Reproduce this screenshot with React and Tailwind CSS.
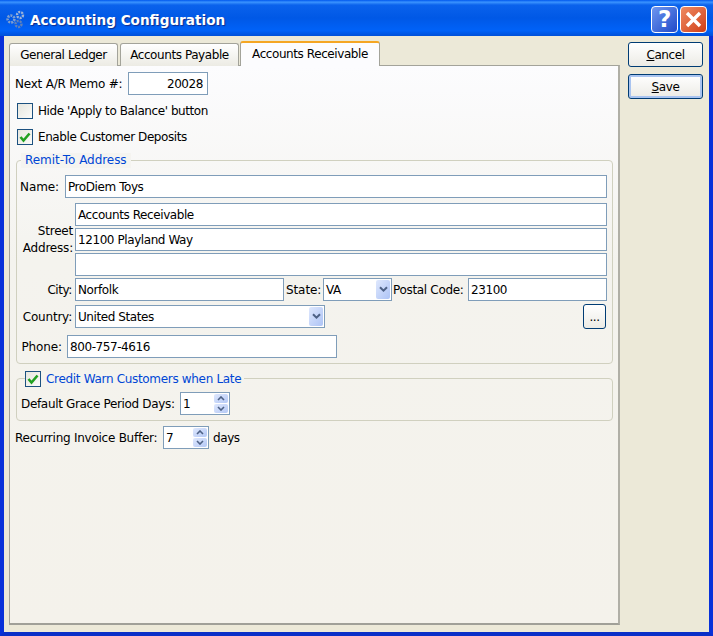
import React from "react";

const font = "font-['DejaVu_Sans',_sans-serif]";

const Field = ({ value = "", className = "", right = false }) => (
  <div
    className={`h-[23px] border border-[#7f9db9] bg-white pl-[2px] leading-[22px] whitespace-nowrap ${
      right ? "text-right pr-[4px]" : ""
    } ${className}`}
  >
    {value}
  </div>
);

const Check = ({ checked, label, blue }) => (
  <div className="flex items-center h-[16px] leading-[16px]">
    <div className="w-[16px] h-[16px] border border-[#1c5180] bg-gradient-to-br from-[#e6e6de] to-[#fbfbf9] flex items-center justify-center">
      {checked && (
        <svg width="12" height="12" viewBox="0 0 12 12">
          <path d="M1.5 6 L4.5 9.5 L10.5 2.5" stroke="#21a121" strokeWidth="2.6" fill="none" />
        </svg>
      )}
    </div>
    <span className={`ml-[5px] ${blue ? "text-[#0046d5] tracking-[-0.32px]" : ""}`}>{label}</span>
  </div>
);

const Combo = ({ value, className = "" }) => (
  <div className={`h-[23px] border border-[#7f9db9] bg-white flex items-center justify-between pl-[2px] pr-[1px] leading-[22px] ${className}`}>
    <span>{value}</span>
    <div className="w-[14px] h-[19px] rounded-[2px] bg-gradient-to-br from-[#dfe8fd] to-[#adc3f5] flex items-center justify-center">
      <svg width="9" height="7" viewBox="0 0 9 7">
        <path d="M1 1.2 L4.5 4.7 L8 1.2" stroke="#4d6185" strokeWidth="2" fill="none" />
      </svg>
    </div>
  </div>
);

const SpinArrow = ({ up }) => (
  <div className="w-[14px] h-[9px] rounded-[2px] bg-gradient-to-br from-[#dfe8fd] to-[#b4c8f5] flex items-center justify-center">
    <svg width="8" height="5" viewBox="0 0 8 5">
      <path d={up ? "M1 4 L4 1 L7 4" : "M1 1 L4 4 L7 1"} stroke="#4d6185" strokeWidth="1.6" fill="none" />
    </svg>
  </div>
);

const Spin = ({ value, className = "" }) => (
  <div className={`h-[23px] border border-[#7f9db9] bg-white flex items-center justify-between pl-[2px] pr-[1px] ${className}`}>
    <span>{value}</span>
    <div className="flex flex-col gap-[1px]">
      <SpinArrow up />
      <SpinArrow />
    </div>
  </div>
);

const XpButton = ({ children, className = "" }) => (
  <div
    className={`border border-[#003c74] rounded-[3px] bg-gradient-to-b from-white to-[#ecebe5] flex items-center justify-center pt-[1px] ${className}`}
  >
    {children}
  </div>
);

const Gears = () => (
  <svg width="19" height="19" viewBox="0 0 19 19">
    <circle cx="5" cy="9" r="3.4" fill="none" stroke="#7f9fd0" strokeWidth="2.6" strokeDasharray="2 1" />
    <circle cx="14" cy="5" r="3" fill="none" stroke="#9db4d8" strokeWidth="2.4" strokeDasharray="2 1" />
    <circle cx="12.5" cy="14" r="3" fill="none" stroke="#6282b8" strokeWidth="2.4" strokeDasharray="2 1" />
  </svg>
);

const App = () => {
  return (
    <div className={`w-[713px] h-[636px] flex flex-col overflow-hidden text-[12px] tracking-[-0.42px] text-black ${font}`}>
      {/* title bar */}
      <div className="h-[36px] shrink-0 flex items-center pl-[6px] pr-[6px] pt-[3px] bg-[linear-gradient(to_bottom,#0058ee_0%,#3a93ff_6%,#0a62ec_14%,#0058e6_50%,#0062f8_85%,#0050d8_100%)]">
        <Gears />
        <span className="ml-[5px] pt-[2px] text-white font-bold text-[13.6px] tracking-normal [text-shadow:1px_1px_1px_#0f2c8c]">
          Accounting Configuration
        </span>
        <div className="ml-auto flex gap-[2px]">
          <div className="w-[27px] h-[27px] rounded-[4px] border border-white bg-gradient-to-br from-[#6f96f0] to-[#2248c8] flex items-center justify-center text-white font-bold text-[23px] leading-none">
            ?
          </div>
          <div className="w-[27px] h-[27px] rounded-[4px] border border-white bg-gradient-to-br from-[#ee8a62] to-[#d03c10] flex items-center justify-center">
            <svg width="19" height="19" viewBox="0 0 19 19">
              <path d="M3 3 L16 16 M16 3 L3 16" stroke="white" strokeWidth="3.4" />
            </svg>
          </div>
        </div>
      </div>

      {/* window body */}
      <div className="flex-1 flex bg-[#ece9d8] border-x-4 border-b-4 border-[#0831d9] border-b-[#0a2fc8]">
        <div className="w-[616px] pl-[5px] pt-[5px] pb-[7px] flex flex-col">
          {/* tabs */}
          <div className="flex items-end h-[25px] relative z-10 -mb-[1px]">
            <div className="w-[109px] h-[23px] border border-[#a3a39a] border-b-0 rounded-t-[3px] bg-gradient-to-b from-white to-[#ecebe4] text-center leading-[22px]">
              General Ledger
            </div>
            <div className="w-[119px] h-[23px] ml-[2px] border border-[#a3a39a] border-b-0 rounded-t-[3px] bg-gradient-to-b from-white to-[#ecebe4] text-center leading-[22px]">
              Accounts Payable
            </div>
            <div className="w-[140px] h-[25px] ml-[1px] border-x border-[#a3a39a] border-t-2 border-t-[#f5a623] rounded-t-[3px] bg-[#fcfcfe] text-center leading-[22px]">
              Accounts Receivable
            </div>
          </div>

          {/* tab panel */}
          <div className="flex-1 border border-[#a3a39a] border-r-2 border-b-2 border-r-[#b0afa6] border-b-[#a0a098] bg-[linear-gradient(to_bottom,#fcfcfe_0%,#f4f3ee_35%,#f4f2eb_100%)] pl-[5px] pr-[6px] pt-[6px]">
            <div className="flex items-center h-[23px]">
              <span className="w-[113px] whitespace-nowrap pt-[1px] tracking-[-0.22px]">Next A/R Memo #:</span>
              <Field value="20028" right className="w-[80px]" />
            </div>
            <div className="mt-[8px] ml-[2px]">
              <Check label="Hide 'Apply to Balance' button" />
            </div>
            <div className="mt-[10px] ml-[2px]">
              <Check checked label="Enable Customer Deposits" />
            </div>

            {/* remit-to group */}
            <div className="relative mt-[15px] ml-[1px] w-[597px] h-[204px] border border-[#d0d0bf] rounded-[4px] pl-[3px] pr-[5px] pt-[14px]">
              <span className="absolute left-[4px] -top-[8px] px-[4px] bg-[#f5f4f0] text-[#0046d5] leading-[15px] tracking-[-0.05px]">
                Remit-To Address
              </span>
              <div className="flex items-center">
                <span className="w-[45px] text-right pr-[6px] pt-[1px] tracking-[-0.1px]">Name:</span>
                <Field value="ProDiem Toys" className="flex-1" />
              </div>
              <div className="flex mt-[5px]">
                <div className="w-[55px] pr-[2px] self-center text-right leading-[17px] tracking-[-0.2px]">
                  Street
                  <br />
                  Address:
                </div>
                <div className="flex-1 flex flex-col gap-[2px]">
                  <Field value="Accounts Receivable" />
                  <Field value="12100 Playland Way" />
                  <Field value="" />
                </div>
              </div>
              <div className="flex items-center mt-[2px]">
                <span className="w-[55px] text-right pr-[3px] pt-[1px]">City:</span>
                <Field value="Norfolk" className="w-[209px]" />
                <span className="ml-[2px] w-[37px] pt-[1px] tracking-[-0.1px]">State:</span>
                <Combo value="VA" className="w-[69px]" />
                <span className="ml-[1px] w-[75px] whitespace-nowrap pt-[1px] tracking-[-0.32px]">Postal Code:</span>
                <Field value="23100" className="flex-1" />
              </div>
              <div className="flex items-center mt-[3px]">
                <span className="w-[55px] text-right pr-[3px] pt-[1px] tracking-[-0.2px]">Country:</span>
                <Combo value="United States" className="w-[250px]" />
                <XpButton className="ml-auto mr-[1px] w-[23px] h-[25px]">...</XpButton>
              </div>
              <div className="flex items-center mt-[6px]">
                <span className="w-[47px] text-right pr-[5px] pt-[1px] tracking-[-0.1px]">Phone:</span>
                <Field value="800-757-4616" className="w-[270px]" />
              </div>
            </div>

            {/* credit group */}
            <div className="relative mt-[14px] ml-[1px] w-[597px] h-[43px] border border-[#d0d0bf] rounded-[4px] pl-[4px] pt-[13px]">
              <div className="absolute left-[8px] -top-[8px] pr-[3px] bg-[#f4f3ee] leading-[15px]">
                <Check checked blue label="Credit Warn Customers when Late" />
              </div>
              <div className="flex items-center">
                <span className="w-[159px] whitespace-nowrap pt-[1px] tracking-[-0.33px]">Default Grace Period Days:</span>
                <Spin value="1" className="w-[50px]" />
              </div>
            </div>

            <div className="flex items-center mt-[5px]">
              <span className="w-[148px] whitespace-nowrap pt-[1px] tracking-[-0.25px]">Recurring Invoice Buffer:</span>
              <Spin value="7" className="w-[46px]" />
              <span className="ml-[4px] pt-[1px]">days</span>
            </div>
          </div>
        </div>

        {/* side buttons */}
        <div className="flex-1 pl-[8px] pt-[6px] flex flex-col">
          <XpButton className="w-[75px] h-[25px]">
            <span>
              <span className="underline">C</span>ancel
            </span>
          </XpButton>
          <XpButton className="w-[75px] h-[25px] mt-[7px] shadow-[inset_0_0_0_2px_#a9c4f0]">
            <span>
              <span className="underline">S</span>ave
            </span>
          </XpButton>
        </div>
      </div>
    </div>
  );
};

export default App;
